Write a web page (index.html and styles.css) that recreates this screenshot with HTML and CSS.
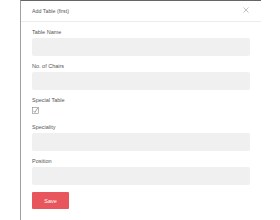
FILE: index.html
```html
<!DOCTYPE html>
<html>
<head>
<meta charset="utf-8">
<link rel="stylesheet" href="styles.css">
</head>
<body>
<div class="modal">
  <div class="modal-header">
    <span class="modal-title">Add Table (first)</span>
    <svg class="close" width="6" height="6" viewBox="0 0 6 6"><path d="M0.5 0.5 L5.5 5.5 M5.5 0.5 L0.5 5.5" stroke="#b0b0b0" stroke-width="0.8" fill="none"/></svg>
  </div>
  <div class="modal-body">
    <div class="group">
      <label class="label">Table Name</label>
      <div class="input"></div>
    </div>
    <div class="group">
      <label class="label">No. of Chairs</label>
      <div class="input"></div>
    </div>
    <div class="group check-group">
      <label class="label">Special Table</label>
      <svg class="check" width="7" height="7" viewBox="0 0 7 7"><rect x="0.4" y="0.4" width="6.2" height="6.2" fill="#fff" stroke="#888" stroke-width="0.6"/><path d="M1.5 3.8 L2.9 5.4 L5.8 0.9" stroke="#666" stroke-width="0.6" fill="none"/></svg>
    </div>
    <div class="group">
      <label class="label">Speciality</label>
      <div class="input"></div>
    </div>
    <div class="group">
      <label class="label">Position</label>
      <div class="input"></div>
    </div>
    <button class="save">Save</button>
  </div>
</div>
</body>
</html>
```
FILE: styles.css
```css
html, body {
  margin: 0;
  padding: 0;
  background: #fff;
  font-family: "Liberation Sans", Arial, sans-serif;
}
.modal {
  margin-left: 20px;
  width: 241px;
  height: 220px;
  border-left: 1px solid #a0a0a0;
  border-top: 1px solid #666;
  box-sizing: border-box;
}
.modal-header {
  height: 20px;
  border-bottom: 1px solid #ececec;
  display: flex;
  align-items: center;
  justify-content: space-between;
  padding: 0 12px 0 11px;
}
.modal-title {
  font-size: 5.3px;
  color: #555;
}
.close {
  display: block;
  margin-top: -2px;
}
.modal-body {
  padding: 7px 11px 0 11px;
}
.group {
  margin-bottom: 7px;
}
.check-group {
  margin-bottom: 0;
  padding-bottom: 10px;
}
.label {
  display: block;
  font-size: 5.5px;
  line-height: 6px;
  color: #555;
  margin-bottom: 3px;
}
.input {
  height: 18px;
  background: #f0f0f0;
  border-radius: 2px;
}
.check {
  display: block;
  margin-top: 4px;
}
.save {
  display: block;
  width: 37px;
  height: 17px;
  margin-top: 7px;
  background: #e8555c;
  color: #fff;
  border: none;
  border-radius: 1px;
  font-family: "Liberation Sans", Arial, sans-serif;
  font-size: 5.5px;
  padding: 0;
}
```
